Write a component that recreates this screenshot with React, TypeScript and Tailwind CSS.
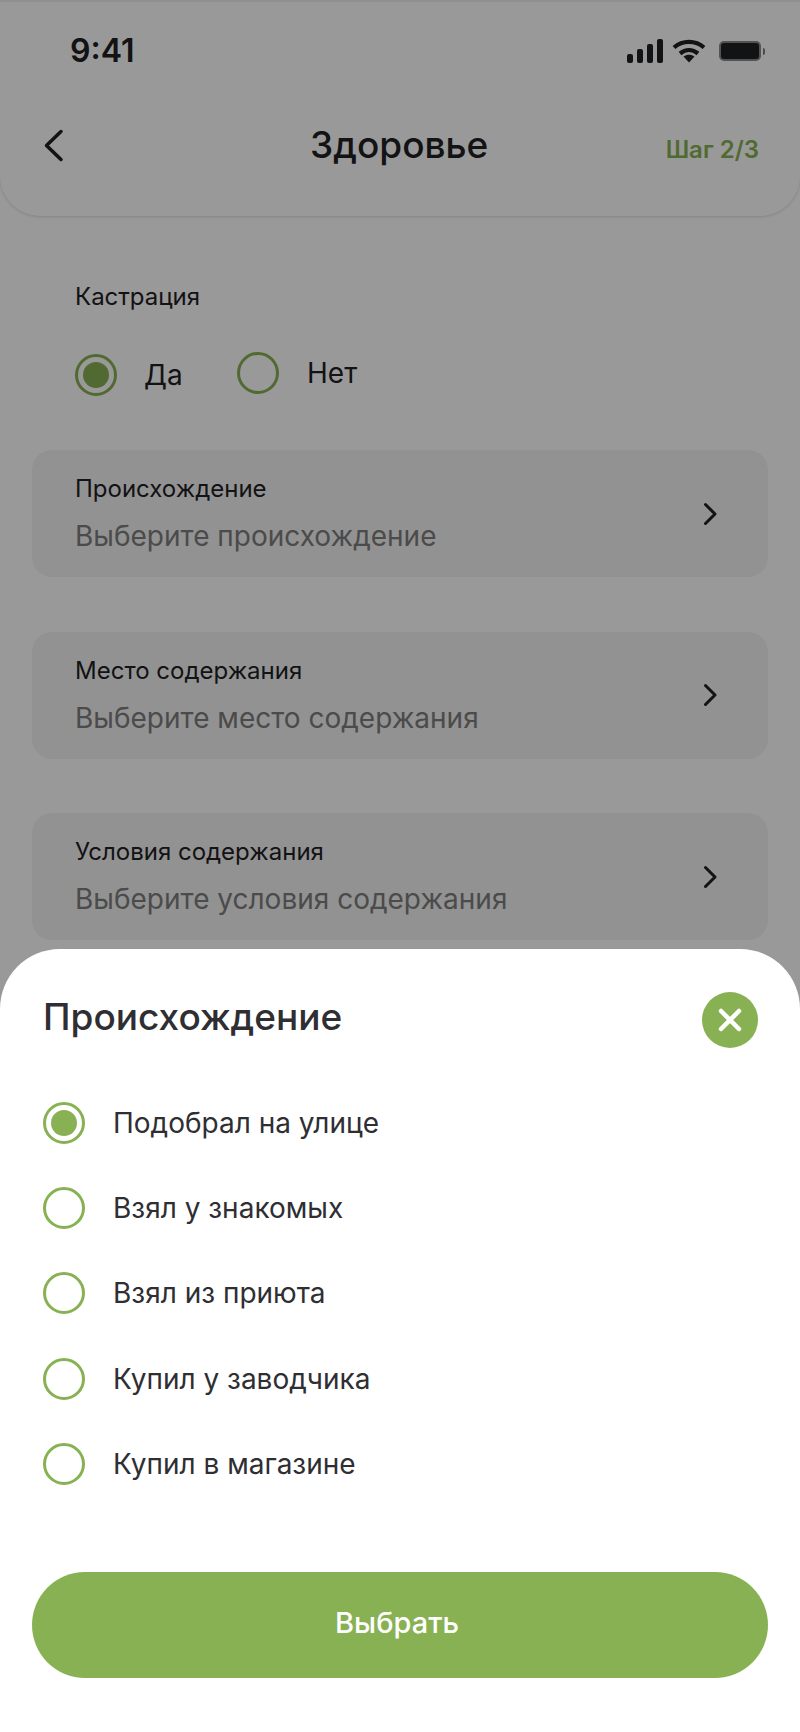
import { X } from 'lucide-react';

const selects = [
  { label: 'Происхождение', hint: 'Выберите происхождение' },
  { label: 'Место содержания', hint: 'Выберите место содержания' },
  { label: 'Условия содержания', hint: 'Выберите условия содержания' },
];

const origins = ['Подобрал на улице', 'Взял у знакомых', 'Взял из приюта', 'Купил у заводчика', 'Купил в магазине'];

function Radio({ checked }: { checked?: boolean }) {
  return (
    <span className="flex h-[42px] w-[42px] shrink-0 items-center justify-center rounded-full border-[3.5px] border-[#88b153]">
      {checked && <span className="h-[26px] w-[26px] rounded-full bg-[#88b153]" />}
    </span>
  );
}

function StatusIcons() {
  return (
    <div className="flex items-center">
      <svg width="37" height="24" viewBox="0 0 37 24" fill="#1f2024">
        <rect x="1" y="15" width="6" height="9" rx="2" />
        <rect x="11" y="10" width="6" height="14" rx="2" />
        <rect x="21" y="5" width="6" height="19" rx="2" />
        <rect x="31" y="0" width="6" height="24" rx="2" />
      </svg>
      <svg className="ml-[9px]" width="34" height="24" viewBox="0 0 34 24" fill="none" stroke="#1f2024" strokeWidth="4.2">
        <path d="M2 8.5C10.5 1 23.5 1 32 8.5" />
        <path d="M8 14.5C13.5 10 20.5 10 26 14.5" />
        <path d="M11.5 17.5L17 23.5L22.5 17.5C19 15 15 15 11.5 17.5Z" fill="#1f2024" stroke="none" />
      </svg>
      <div className="ml-[13px] flex items-center">
        <span className="h-[20px] w-[42px] rounded-[5px] border-2 border-[#8a8a8a] bg-[#1f2024]" />
        <span className="ml-[2px] h-[7px] w-[2px] rounded-r-sm bg-[#7f7f7f]" />
      </div>
    </div>
  );
}

export default function App() {
  return (
    <div className="relative h-[1732px] w-[800px] overflow-hidden bg-white font-['Inter',sans-serif] text-[#1f2024]">
      <header className="h-[216px] rounded-b-[40px] border-t-2 border-[#f0f0f0] bg-white shadow-[0_1px_3px_rgba(0,0,0,0.14)]">
        <div className="flex items-center justify-between pt-[30px] pl-[70px] pr-[35px]">
          <span className="text-[32px] leading-[38px] font-semibold">9:41</span>
          <StatusIcons />
        </div>
        <div className="mt-[53px] flex items-center pl-[43px] pr-[41px]">
          <svg width="21" height="33" viewBox="0 0 21 33" fill="none" stroke="currentColor" strokeWidth="3.5" strokeLinecap="round" strokeLinejoin="round">
            <path d="M18 2.5L3.5 16.5L18 30.5" />
          </svg>
          <h1 className="ml-[246px] text-[37px] leading-[44px] font-medium">Здоровье</h1>
          <span className="mt-[10px] ml-auto text-[24px] leading-[30px] font-semibold text-[#88b153]">Шаг 2/3</span>
        </div>
      </header>

      <main className="px-[32px]">
        <div className="pl-[43px]">
          <p className="mt-[66px] text-[24px] leading-[30px]">Кастрация</p>
          <div className="mt-[40px] flex items-start">
            <div className="mt-[2px] flex w-[162px] items-center">
              <Radio checked />
              <span className="ml-[27px] text-[28px] leading-[42px]">Да</span>
            </div>
            <div className="flex items-center">
              <Radio />
              <span className="ml-[28px] text-[28px] leading-[42px]">Нет</span>
            </div>
          </div>
        </div>
        <div className="mt-[54px] flex flex-col gap-[54.5px]">
          {selects.map((s) => (
            <div key={s.label} className="flex h-[127px] items-center justify-between rounded-[20px] bg-[#f4f4f4] pl-[43px] pr-[51px]">
              <div>
                <p className="text-[24px] leading-[30px]">{s.label}</p>
                <p className="mt-[15px] text-[28px] leading-[34px] text-[#7d7d7d]">{s.hint}</p>
              </div>
              <svg width="14" height="24" viewBox="0 0 14 24" fill="none" stroke="currentColor" strokeWidth="3" strokeLinecap="round" strokeLinejoin="round">
                <path d="M2.5 2.5L12 12L2.5 21.5" />
              </svg>
            </div>
          ))}
        </div>
      </main>

      {/* затемнение под шторкой */}
      <div className="absolute inset-0 bg-black/40" />

      <section className="absolute inset-x-0 bottom-0 h-[783px] rounded-t-[60px] bg-white px-[32px] text-[#2e2e33]">
        <div className="flex items-center justify-between pt-[43px] pl-[11px] pr-[10px]">
          <h2 className="mb-[6px] text-[37px] leading-[50px] font-medium">Происхождение</h2>
          <span className="flex h-[56px] w-[56px] items-center justify-center rounded-full bg-[#88b153] text-white">
            <X size={36} strokeWidth={3} />
          </span>
        </div>
        <ul className="mt-[54px] flex flex-col gap-[43.2px] pl-[11px]">
          {origins.map((o, i) => (
            <li key={o} className="flex items-center gap-[28px] text-[28px] leading-[42px]">
              <Radio checked={i === 0} />
              {o}
            </li>
          ))}
        </ul>
        <button className="mt-[87px] flex h-[106px] w-full items-center justify-center rounded-full bg-[#88b153] pr-[6px] pb-[4px] text-[29px] font-medium text-white">
          Выбрать
        </button>
      </section>
    </div>
  );
}
